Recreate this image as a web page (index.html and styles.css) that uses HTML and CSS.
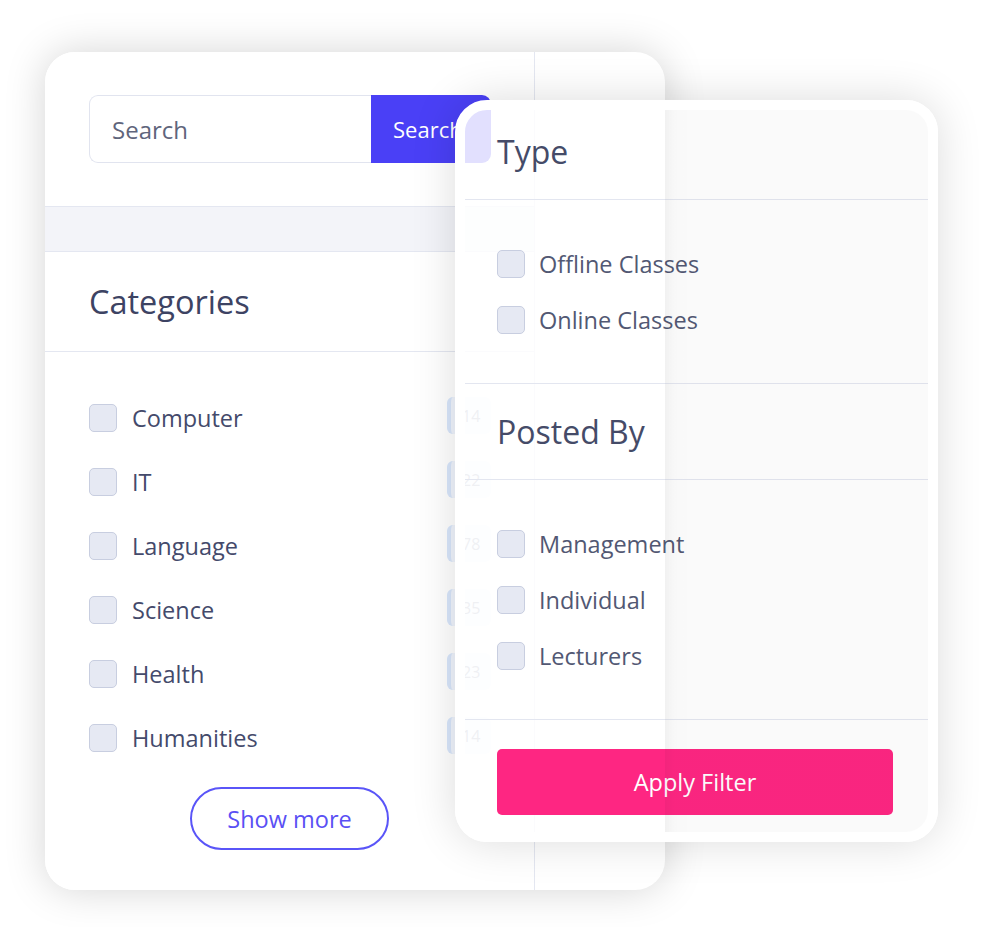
FILE: index.html
```html
<!DOCTYPE html>
<html lang="en">
<head>
    <meta charset="UTF-8">
    <meta name="viewport" content="width=device-width, initial-scale=1.0">
    <title>Course Filters</title>
    <link rel="stylesheet" href="styles.css">
</head>
<body>
    <div class="stage">
        <div class="frame">
            <div class="sidebar">
                <div class="widget search-widget">
                    <form class="search-form">
                        <input type="text" placeholder="Search">
                        <button type="button">Search</button>
                    </form>
                </div>
                <div class="widget-gap"></div>
                <div class="widget">
                    <h3 class="widget-title">Categories</h3>
                    <ul class="cat-list">
                        <li><span class="box"></span><span class="label">Computer</span><span class="count">14</span></li>
                        <li><span class="box"></span><span class="label">IT</span><span class="count">22</span></li>
                        <li><span class="box"></span><span class="label">Language</span><span class="count">78</span></li>
                        <li><span class="box"></span><span class="label">Science</span><span class="count">35</span></li>
                        <li><span class="box"></span><span class="label">Health</span><span class="count">23</span></li>
                        <li><span class="box"></span><span class="label">Humanities</span><span class="count">14</span></li>
                    </ul>
                    <div class="more-wrap">
                        <button class="show-more">Show more</button>
                    </div>
                </div>
            </div>
        </div>

        <!-- filter card sits over the sidebar card -->
        <div class="filter-card">
            <h3 class="filter-title first">Type</h3>
            <ul class="filter-list">
                <li><span class="box"></span>Offline Classes</li>
                <li><span class="box"></span>Online Classes</li>
            </ul>
            <h3 class="filter-title">Posted By</h3>
            <ul class="filter-list">
                <li><span class="box"></span>Management</li>
                <li><span class="box"></span>Individual</li>
                <li><span class="box"></span>Lecturers</li>
            </ul>
            <div class="filter-footer">
                <button class="apply">Apply Filter</button>
            </div>
            <div class="veil"></div>
        </div>
    </div>
</body>
</html>
```

FILE: styles.css
```css
body {
    font-family: "Open Sans", Arial, sans-serif;
    background-color: white;
    color: #464c6c;
    margin: 0;
    padding: 0;
}
ul {
    list-style: none;
    margin: 0;
    padding: 0;
}
button {
    font-family: inherit;
    cursor: pointer;
}
.stage {
    position: relative;
    width: 982px;
    height: 927px;
    padding: 52px 0 0 45px;
    box-sizing: border-box;
    overflow: hidden;
}
.frame {
    width: 620px;
    height: 838px;
    background-color: white;
    border-radius: 30px;
    overflow: hidden;
    box-shadow: 0 0 40px rgba(0, 0, 0, 0.17);
}
.sidebar {
    width: 490px;
    min-height: 100%;
    border-right: 1px solid #e4e7f1;
    box-sizing: border-box;
}
.widget {
    background-color: white;
    border-bottom: 1px solid #e4e7f1;
}
.widget-gap {
    height: 44px;
    background-color: #f3f4f9;
    border-bottom: 1px solid #e4e7f1;
}
.search-widget {
    padding: 43px 43px 43px 44px;
}
.search-form {
    display: flex;
    height: 68px;
    margin: 0;
}
.search-form input {
    flex: 1;
    min-width: 0;
    border: 1px solid #e1e4ef;
    border-right: none;
    border-radius: 9px 0 0 9px;
    padding: 0 22px;
    font-family: inherit;
    font-size: 24px;
    color: #5b6178;
    outline: none;
}
.search-form input::placeholder {
    color: #5f657c;
}
.search-form button {
    width: 120px;
    border: none;
    border-radius: 0 9px 9px 0;
    background-color: #4a40f6;
    color: white;
    font-size: 22px;
    text-align: left;
    padding-left: 22px;
}
.widget-title {
    margin: 0;
    height: 99px;
    display: flex;
    align-items: center;
    padding-left: 44px;
    border-bottom: 1px solid #e4e7f1;
    font-size: 32.5px;
    font-weight: 400;
    color: #3d4363;
}
.cat-list {
    padding: 34px 43px 0 44px;
}
.cat-list li {
    display: flex;
    align-items: center;
    height: 64px;
}
.box {
    width: 26px;
    height: 26px;
    flex: none;
    border: 1px solid #c8cee0;
    border-radius: 5px;
    background-color: #e6e9f3;
}
.label {
    margin-left: 15px;
    font-size: 23.5px;
    color: #444a6b;
}
.count {
    margin-left: auto;
    width: 44px;
    height: 37px;
    margin-top: -6px;
    box-sizing: border-box;
    padding: 8px 0 0 11px;
    border-left: 4px solid #d8e6fb;
    border-radius: 6px;
    background-color: #f1f5fd;
    font-size: 16px;
    color: #9aa2b6;
}
.more-wrap {
    display: flex;
    justify-content: center;
    padding: 17px 0 40px;
}
.show-more {
    width: 199px;
    height: 63px;
    border: 2px solid #5a55f8;
    border-radius: 32px;
    background-color: white;
    color: #5a50f4;
    font-size: 23.5px;
}

/* overlay card */
.filter-card {
    position: absolute;
    left: 455px;
    top: 100px;
    width: 483px;
    height: 742px;
    box-sizing: border-box;
    border: 10px solid white;
    border-radius: 32px;
    background-color: rgba(255, 255, 255, 0.84);
    box-shadow: 0 0 45px rgba(0, 0, 0, 0.14);
    overflow: hidden;
}
.filter-title {
    margin: 0;
    height: 95px;
    display: flex;
    align-items: center;
    padding-left: 32px;
    border-bottom: 1px solid #e3e6f0;
    font-size: 32px;
    font-weight: 400;
    color: #454b68;
}
.filter-title.first {
    height: 83px;
    padding-bottom: 6px;
}
.filter-list {
    padding: 36px 32px 35px;
    border-bottom: 1px solid #e3e6f0;
}
.filter-list li {
    display: flex;
    align-items: center;
    gap: 14px;
    height: 56px;
    font-size: 23.5px;
    color: #525873;
}
.filter-footer {
    padding: 29px 35px 16px 32px;
}
.apply {
    width: 100%;
    height: 66px;
    border: none;
    border-radius: 5px;
    background-color: #fe2682;
    color: white;
    font-size: 23.5px;
}
.veil {
    position: absolute;
    left: 200px;
    top: 0;
    right: 0;
    bottom: 0;
    background: linear-gradient(to right, rgba(0, 0, 0, 0.045), rgba(0, 0, 0, 0.02) 10px);
    pointer-events: none;
}
```
